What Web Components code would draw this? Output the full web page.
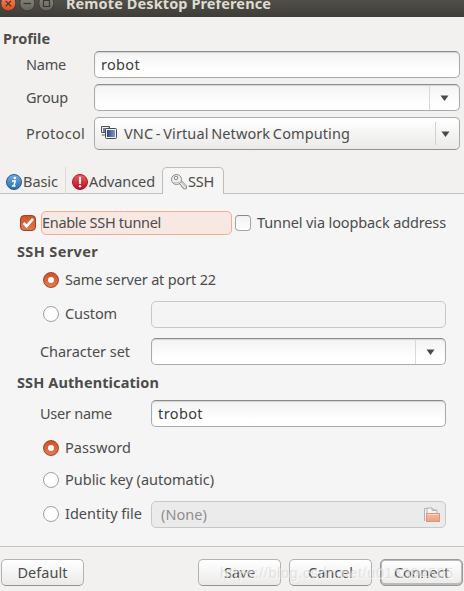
<!DOCTYPE html>
<html lang="en">
<head>
<meta charset="utf-8">
<title>Remote Desktop Preference</title>
<style>
html,body{margin:0;height:591px;overflow:hidden;background:#f2f1f0}
body{font:14.5px/20px "Noto Sans","Open Sans",sans-serif;color:#4c4c4c}
</style>
</head>
<body>
<preference-window></preference-window>
<script>
const define = (name, html, setup) => customElements.define(name, class extends HTMLElement {
  connectedCallback() {
    if (this.shadowRoot) return;
    const root = this.attachShadow({mode: "open"});
    root.innerHTML = typeof html === "function" ? html(this) : html;
    if (setup) setup(this, root);
  }
});

/* Label whose tracking is adjusted to occupy the width given in "w". */
define("fit-label", el => `<style>:host{display:block;flex:none;white-space:pre;padding-bottom:2px;width:${el.getAttribute("w")}px}
  :host([bold]){font-weight:700} :host([tight]){word-spacing:-1.2px} span{display:inline-block}</style><span>${el.getAttribute("text")}</span>`, (el, root) => {
  const s = root.querySelector("span"), n = s.textContent.length;
  const extra = +el.getAttribute("w") - s.getBoundingClientRect().width;
  s.style.letterSpacing = extra / n + "px";
});

define("window-button", el => `<style>:host{display:block;width:16px;height:17px;flex:none}svg{display:block}</style>
  <svg width="16" height="17" viewBox="0 0 16 17"><defs><linearGradient id="g" x2="0" y2="1">
  ${el.getAttribute("kind") === "close" ? '<stop stop-color="#f58a62"/><stop offset="1" stop-color="#e04b1c"/>' : '<stop stop-color="#8b887f"/><stop offset="1" stop-color="#65635b"/>'}
  </linearGradient></defs><circle cx="8.3" cy="3.4" r="7.5" fill="url(#g)" stroke="#35342f" stroke-width=".8"/>
  <path fill="none" stroke="#3a332e" stroke-width="1.2" d="${{close: "M5.6 .9l5.4 5.4M11 .9l-5.4 5.4", min: "M4.5 3.5h7.5", max: "M5.5 .5h6v6h-6z"}[el.getAttribute("kind")]}"/></svg>`);

define("text-entry", `<style>
  :host{display:flex;box-sizing:border-box;height:27px;border:1px solid #aaa;border-top-color:#8b8b8b;border-radius:5px;
    background:linear-gradient(#f3f3f3,#fff 75%);box-shadow:inset 0 1px 1px #d5d5d5;align-items:center;padding-left:6px;color:#3c3c3c;flex:1;overflow:hidden}
  :host([disabled]){background:#f4f4f4;border-color:#c8c8c8;box-shadow:none}
  .arrow{display:none;width:30px;height:25px;box-sizing:border-box;border-left:1px solid #d8d8d8;margin-left:auto;align-items:center;justify-content:center}
  :host([combo]) .arrow{display:flex}</style><slot></slot>
  <span class="arrow"><svg width="9" height="6"><path d="M.5.5h8L4.5 6z" fill="#4a4a4a"/></svg></span>`);

define("option-box", `<style>:host{display:flex;flex:1;box-sizing:border-box;height:33px;border:1px solid #aaa;border-bottom-color:#929292;border-radius:5px;
  background:linear-gradient(#fff,#ebeae9);align-items:center;padding-left:6px;gap:7px}
  .a{display:flex;margin-left:auto;width:24px;height:23px;box-sizing:border-box;border-left:1px solid #d2d1d0;align-items:center;padding-left:5px}
  ::slotted(ui-icon){margin-bottom:1px}</style>
  <slot></slot><span class="a"><svg width="9" height="6"><path d="M.5.5h8L4.5 6z" fill="#4a4a4a"/></svg></span>`);

define("action-button", `<style>:host{display:flex;flex:none;box-sizing:border-box;width:83px;height:27px;border:1px solid #b3b2b1;border-bottom-color:#949392;border-radius:5px;
  background:linear-gradient(#fff,#ebeae9);align-items:center;justify-content:center}
  :host([default]){border-color:#999;box-shadow:inset 0 0 0 1px #bbb,inset 0 -1px 0 1px #bbb}</style><slot></slot>`);

define("check-box", `<style>:host{display:block;box-sizing:border-box;width:16px;height:16px;flex:none;border:1px solid #a5a5a5;border-top-color:#888;border-radius:4px;background:linear-gradient(#f1f1f1,#fff)}
  svg{display:none}:host([checked]){border-color:#9d4324;background:linear-gradient(#cf5427,#e2764d)}:host([checked]) svg{display:block}</style>
  <svg width="14" height="14"><path d="M2.6 7l3 3.2L12 2.8" fill="none" stroke="#fff" stroke-width="2.6"/></svg>`);

define("radio-dot", `<style>:host{display:flex;box-sizing:border-box;width:16px;height:16px;flex:none;border:1px solid #a0a0a0;border-radius:50%;background:#fff;align-items:center;justify-content:center}
  :host([checked]){border-color:#a64321;background:linear-gradient(#ce5226,#e37951)}
  :host([checked])::before{content:"";width:6px;height:6px;border-radius:50%;background:#fff}</style>`);

const icons = {
  info: `<defs><linearGradient id="g" x2="0" y2="1"><stop stop-color="#78aede"/><stop offset="1" stop-color="#286ba8"/></linearGradient></defs>
    <circle cx="8" cy="8" r="7.5" fill="url(#g)" stroke="#245d91"/><circle cx="8.8" cy="4" r="1.3" fill="#fff"/><path d="M6 7h3.2L7.8 12h1.7M5.8 12h2" fill="none" stroke="#fff" stroke-width="1.5"/>`,
  alert: `<defs><linearGradient id="g" x2="0" y2="1"><stop stop-color="#f06059"/><stop offset="1" stop-color="#b50a22"/></linearGradient></defs>
    <circle cx="8" cy="8" r="7.5" fill="url(#g)" stroke="#ad1527"/><path d="M6.9 2.7h2.2L8.8 10H7.2z" fill="#fff"/><circle cx="8" cy="12.2" r="1.2" fill="#fff"/>`,
  key: `<g stroke="#898985" fill="#f0f0ec"><path d="M8.6 8.2l1.8-1.6 5 5.2v3h-3l-.3-1.7-1.7-.3-.3-1.8-2.2-1.6z"/><circle cx="5.5" cy="5.5" r="5"/><circle cx="5" cy="4" r="1.8" fill="#f6f6f6"/></g><path d="M3 8.4c1.5.8 3.5.6 5-.6M10 8.2l4.5 4.8" stroke="#b4b4ae" fill="none"/>`,
  vnc: `<defs><linearGradient id="g"><stop stop-color="#29498c"/><stop offset="1" stop-color="#8297c4"/></linearGradient></defs>
    <path d="M.5 1.5h8v6h-8z" fill="#6781b0" stroke="#555"/><path d="M1.5 2.5h6M1.5 2v5" stroke="#eee"/><path d="M.8 10h3" stroke="#555"/><rect x="4.5" y="3.5" width="11" height="10" rx="1" fill="#f2f2f2" stroke="#484848"/><path d="M6 5h8v7H6z" fill="url(#g)"/>`,
  folder: `<defs><linearGradient id="g" x2="0" y2="1"><stop stop-color="#f2bda4"/><stop offset="1" stop-color="#eba080"/></linearGradient></defs>
    <path d="M.5 14V1.5h3M3 14V1h5l2 2h3v4" fill="#f5f5f5" stroke="#b2b2b2"/><path d="M8 1v2.5h4.5" fill="none" stroke="#b2b2b2"/><rect x="2.5" y="6.5" width="13" height="8" fill="url(#g)" stroke="#df9678"/><path d="M3.5 7.5h11" stroke="#f8d7c8"/>`
};
define("ui-icon", el => `<style>:host{display:block;width:16px;height:16px;flex:none}svg{display:block}</style><svg width="16" height="16">${icons[el.getAttribute("name")]}</svg>`);

/* One form line: "h" is its height, "pad" its left inset, "top" the space above it. */
define("form-row", el => `<style>:host{display:flex;align-items:center;box-sizing:border-box;height:${el.getAttribute("h")}px;
  padding-left:${el.getAttribute("pad")}px;margin-top:${el.getAttribute("top") || 0}px}::slotted(field-caption){align-self:flex-start}</style><slot></slot>`);

define("field-caption", el => `<style>:host{display:flex;flex:none;align-items:center;gap:6px;width:${el.getAttribute("col")}px;height:${el.getAttribute("h") || 26}px}</style><slot></slot>`);

define("title-bar", `<style>:host{display:flex;height:17px;gap:3px;background:linear-gradient(#504f48,#3d3c38);overflow:hidden;color:#dfdbd2}
  fit-label{margin:-7px 0 0 9px}</style>
  <window-button kind="close"></window-button><window-button kind="min"></window-button><window-button kind="max"></window-button>
  <fit-label bold w="205" text="Remote Desktop Preference"></fit-label>`);

define("tab-strip", `<style>:host{display:flex;height:27px;margin-top:17px;box-sizing:border-box}
  div{display:flex;align-items:center;box-sizing:border-box;border-bottom:1px solid #c3c2c0;padding-top:3px;gap:1px}
  .a{width:66px;padding-left:6px;border-right:1px solid #dedddc}.b{width:96px;padding-left:6px}
  .c{width:62px;padding:1px 0 0 8px;border:1px solid #bebdbb;border-bottom:0;border-radius:5px 5px 0 0;background:#f5f5f5}.d{flex:1}</style>
  <div class="a"><ui-icon name="info"></ui-icon><fit-label w="35" text="Basic"></fit-label></div>
  <div class="b"><ui-icon name="alert"></ui-icon><fit-label w="66" text="Advanced"></fit-label></div>
  <div class="c"><ui-icon name="key"></ui-icon><fit-label w="26" text="SSH"></fit-label></div><div class="d"></div>`);

define("profile-form", `<style>:host{display:flow-root;height:133px;padding-right:4px}</style>
  <form-row h="22" pad="3" top="11"><fit-label bold w="47" text="Profile"></fit-label></form-row>
  <form-row h="27" pad="26" top="1"><field-caption col="68" h="28"><fit-label w="40" text="Name"></fit-label></field-caption><text-entry><fit-label w="39" text="robot"></fit-label></text-entry></form-row>
  <form-row h="27" pad="26" top="6"><field-caption col="68" h="28"><fit-label w="42" text="Group"></fit-label></field-caption><text-entry combo></text-entry></form-row>
  <form-row h="33" pad="26" top="6"><field-caption col="68" h="33"><fit-label w="59" text="Protocol"></fit-label></field-caption>
    <option-box><ui-icon name="vnc"></ui-icon><fit-label tight w="226" text="VNC - Virtual Network Computing"></fit-label></option-box></form-row>`);

/* Tunnel settings shown on the selected tab. */
define("ssh-page", `<style>:host{display:block;box-sizing:border-box;height:353px;background:#f5f5f5;border-bottom:1px solid #c3c2c0;padding-right:18px;overflow:hidden}
  .focus{display:flex;box-sizing:border-box;width:191px;height:24px;margin:0 3px 0 5px;border:1px solid #f2ad94;border-radius:5px;background:#f7e8e3;align-items:center}
  check-box+fit-label{margin-left:6px} ui-icon{margin:0 5px 0 auto} .file{background:#ebebeb;padding-left:9px;color:#8e8e8e}</style>
  <form-row h="24" pad="20" top="17"><check-box checked></check-box><div class="focus"><fit-label w="119" text="Enable SSH tunnel"></fit-label></div><check-box></check-box><fit-label w="189" text="Tunnel via loopback address"></fit-label></form-row>
  <form-row h="20" pad="17" top="7"><fit-label bold w="81" text="SSH Server"></fit-label></form-row>
  <form-row h="20" pad="43" top="8"><field-caption col="108" h="20"><radio-dot checked></radio-dot><fit-label w="151" text="Same server at port 22"></fit-label></field-caption></form-row>
  <form-row h="27" pad="43" top="11"><field-caption col="108"><radio-dot></radio-dot><fit-label w="52" text="Custom"></fit-label></field-caption><text-entry disabled></text-entry></form-row>
  <form-row h="27" pad="40" top="10"><field-caption col="111" h="28"><fit-label w="90" text="Character set"></fit-label></field-caption><text-entry combo></text-entry></form-row>
  <form-row h="20" pad="17" top="8"><fit-label bold w="142" text="SSH Authentication"></fit-label></form-row>
  <form-row h="27" pad="40" top="7"><field-caption col="111" h="28"><fit-label w="72" text="User name"></fit-label></field-caption><text-entry><fit-label w="45" text="trobot"></fit-label></text-entry></form-row>
  <form-row h="20" pad="43" top="11"><field-caption col="108" h="20"><radio-dot checked></radio-dot><fit-label w="66" text="Password"></fit-label></field-caption></form-row>
  <form-row h="20" pad="43" top="12"><field-caption col="108" h="20"><radio-dot></radio-dot><fit-label w="149" text="Public key (automatic)"></fit-label></field-caption></form-row>
  <form-row h="27" pad="43" top="11"><field-caption col="108"><radio-dot></radio-dot><fit-label w="77" text="Identity file"></fit-label></field-caption><text-entry disabled class="file"><fit-label w="46" text="(None)"></fit-label><ui-icon name="folder"></ui-icon></text-entry></form-row>`);

define("action-bar", `<style>:host{display:flex;position:relative;height:44px;box-sizing:border-box;padding:12px 1px 0 1px;gap:8px}
  .gap{flex:1}.mark{position:absolute;left:220px;top:16px;color:rgba(205,205,205,.5);text-shadow:1px 1px 0 rgba(255,255,255,.6);font:14.5px/20px "Liberation Sans",sans-serif}</style>
  <action-button><fit-label w="50" text="Default"></fit-label></action-button><span class="gap"></span>
  <action-button><fit-label w="31" text="Save"></fit-label></action-button>
  <action-button><fit-label w="45" text="Cancel"></fit-label></action-button>
  <action-button default><fit-label w="55" text="Connect"></fit-label></action-button>
  <div class="mark"><fit-label w="234" text="https://blog.csdn.net/u013394505"></fit-label></div>`);

define("preference-window", `<style>:host{display:block;width:464px;height:591px;overflow:hidden;background:#f2f1f0}</style>
  <title-bar></title-bar><profile-form></profile-form><tab-strip></tab-strip><ssh-page></ssh-page><action-bar></action-bar>`);
</script>
</body>
</html>
